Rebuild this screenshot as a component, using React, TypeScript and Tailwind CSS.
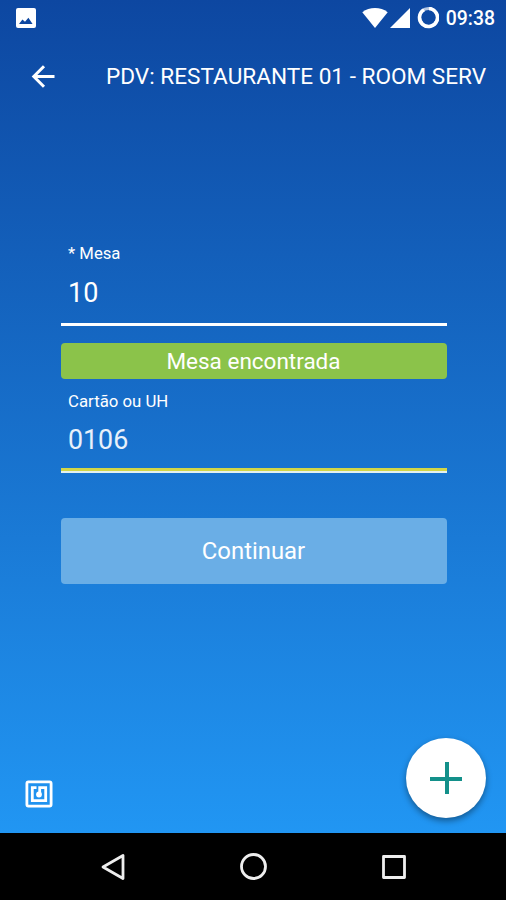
import React from "react";

const StatusBar = () => {
    return (
        <div className="h-[35px] flex items-center justify-between pl-4 pr-[11px]">
            <svg className="w-5 h-5" viewBox="0 0 20 20">
                <rect width="20" height="20" rx="2" fill="#fff" />
                <path
                    d="M3 16l3.4-4.600 2.600 2.400 3.400-4L16.600 16z"
                    fill="#0d47a1"
                />
            </svg>
            <div className="flex items-center">
                <svg className="w-[26px] h-5" viewBox="0 0 26 20" fill="#fff">
                    <path d="M13 20L.3 4.200C4 1.300 8.300 0 13 0s9 1.300 12.700 4.200z" />
                </svg>
                <svg
                    className="w-5 h-5 ml-[2px]"
                    viewBox="0 0 20 20"
                    fill="#fff"
                >
                    <path d="M20 0v20H0z" />
                </svg>
                <svg
                    className="w-[22px] h-[22px] ml-[7px]"
                    viewBox="0 0 22 22"
                    fill="none"
                    stroke="#fff"
                >
                    <circle
                        cx="11.500"
                        cy="10.500"
                        r="9"
                        strokeWidth="3"
                        strokeOpacity="0.7"
                    />
                    <path
                        d="M12 1.500A9 9 0 1 1 7 2.700"
                        strokeWidth="3.600"
                    />
                </svg>
                <span className="relative top-px ml-[7px] text-[19.400px] leading-5 font-medium">
                    09:38
                </span>
            </div>
        </div>
    );
};

const Header = () => {
    return (
        <div className="h-[82px] flex items-center">
            <svg
                className="w-6 h-6 ml-[31px] shrink-0"
                viewBox="0 0 24 24"
                fill="none"
                stroke="#fff"
                strokeWidth="3"
            >
                <path d="M23.500 12.500H3M13 2.300L2.800 12.500 13 22.700" />
            </svg>
            <h1 className="ml-[51px] pt-px text-[22.600px] leading-7 whitespace-nowrap">
                PDV: RESTAURANTE 01 - ROOM SERV
            </h1>
        </div>
    );
};

const NfcIcon = () => {
    return (
        <svg
            className="w-7 h-7 mb-[10px]"
            viewBox="0 0 28 28"
            fill="none"
            stroke="#fff"
            strokeWidth="2.800"
        >
            <rect x="1.900" y="1.900" width="24.200" height="24.200" rx="1.500" />
            <path d="M11.500 7.700H7.300v13h13.400v-13h-6v6" />
            <circle cx="14" cy="14.500" r="2.900" fill="#fff" stroke="none" />
        </svg>
    );
};

const NavBar = () => {
    return (
        <div className="h-[67px] bg-black flex items-center justify-between pl-[100px] pr-[98px]">
            <svg
                className="w-7 h-7"
                viewBox="0 0 28 28"
                fill="none"
                stroke="#eee"
                strokeWidth="2.800"
                strokeLinejoin="round"
            >
                <path d="M23 2.500v23L3 14z" />
            </svg>
            <svg
                className="w-7 h-7"
                viewBox="0 0 28 28"
                fill="none"
                stroke="#eee"
                strokeWidth="2.800"
            >
                <circle cx="13.500" cy="13.500" r="12" />
            </svg>
            <svg
                className="w-7 h-7"
                viewBox="0 0 28 28"
                fill="none"
                stroke="#eee"
                strokeWidth="2.800"
                strokeLinejoin="round"
            >
                <path d="M3.500 3.500h21v21h-21z" />
            </svg>
        </div>
    );
};

const App = () => {
    return (
        <div className="w-[506px] h-[900px] flex flex-col overflow-hidden text-white font-[Roboto,sans-serif]">
            <div className="h-[833px] flex flex-col bg-[linear-gradient(to_bottom,#0d47a1,#2196f3)]">
                <StatusBar />
                <Header />
                <div className="w-[386px] ml-[60.500px] mt-[127px] flex flex-col">
                    <label className="pl-[7.500px] text-[16.700px] leading-5">
                        * Mesa
                    </label>
                    <div className="h-[62px] pt-[13px] pl-[7.500px] border-b-[3px] border-white text-[27px] leading-8">
                        10
                    </div>
                    <div className="mt-[17px] h-9 pt-0.5 rounded bg-[#8bc34a] flex items-center justify-center text-[22.500px]">
                        Mesa encontrada
                    </div>
                    <label className="mt-3 pl-[7.500px] text-[16.800px] leading-5">
                        Cartão ou UH
                    </label>
                    <div className="h-[60px] pt-[13px] pl-[7.500px] border-b-[3px] border-[#d3d648] text-[26.800px] leading-8 text-white/90">
                        0106
                    </div>
                    <div className="h-[2px] bg-[#e4f1ee]" />
                    <button className="mt-[45px] h-[66px] pt-px rounded bg-[#6aaee6] text-[23.900px]">
                        Continuar
                    </button>
                </div>
                <div className="mt-auto mb-[15px] pl-[25px] pr-[20px] flex items-end justify-between">
                    <NfcIcon />
                    <button className="w-20 h-20 rounded-full bg-white shadow-[0_3px_6px_rgba(0,0,0,0.4)] flex items-center justify-center">
                        <svg
                            className="w-8 h-8"
                            viewBox="0 0 32 32"
                            stroke="#13908a"
                            strokeWidth="4"
                        >
                            <path d="M17 0v32M0 17h32" />
                        </svg>
                    </button>
                </div>
            </div>
            <NavBar />
        </div>
    );
};

export default App;
